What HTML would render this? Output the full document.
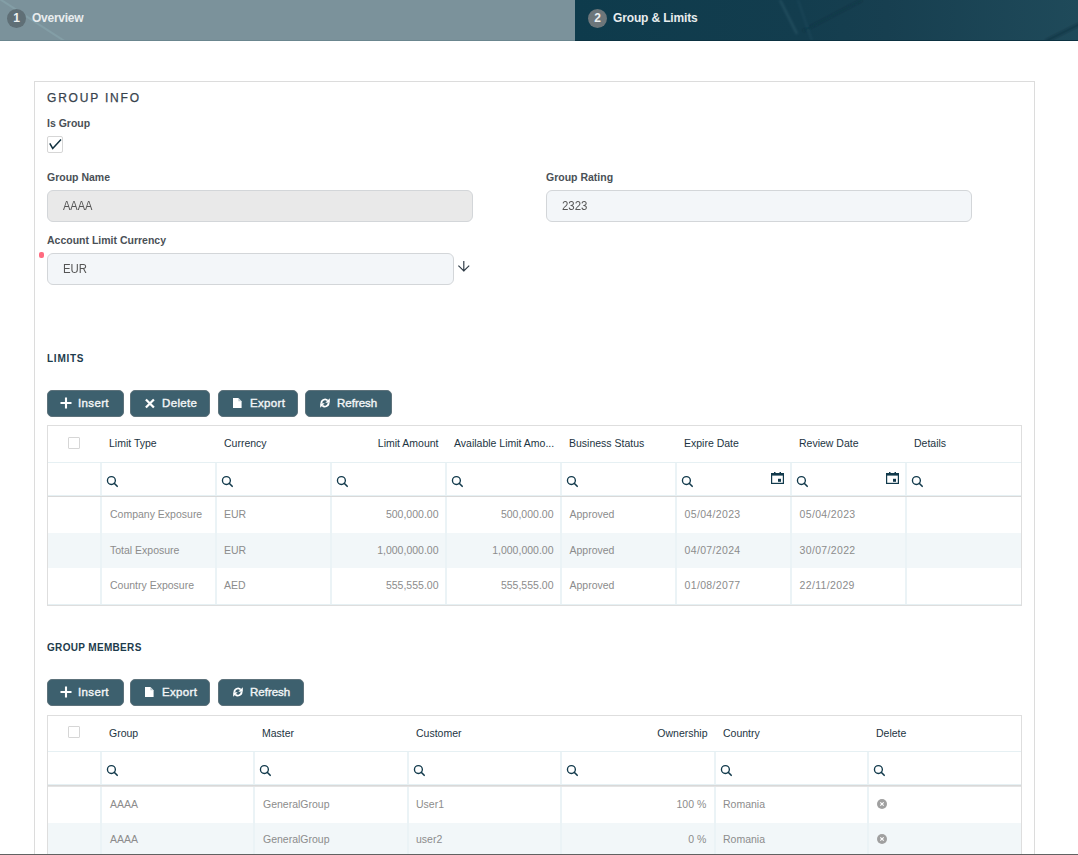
<!DOCTYPE html>
<html><head><meta charset="utf-8"><style>
*{box-sizing:border-box;margin:0;padding:0}
html,body{width:1078px;height:855px;overflow:hidden;background:#fff;font-family:"Liberation Sans",sans-serif}
body{position:relative}
.a{position:absolute;white-space:nowrap}
.circ{position:absolute;width:19px;height:19px;border-radius:50%;text-align:center;color:#eef1f2;font-size:12px;font-weight:bold;line-height:19px}
.ttl{font-weight:bold;font-size:12px;color:#e8ecee;line-height:14px}
.lbl{font-weight:bold;font-size:10.5px;color:#4a5056;line-height:12px}
.inp{position:absolute;height:32px;border:1px solid #d3d6d9;border-radius:6px;background:#f3f6f9;font-size:12px;color:#555;line-height:30px;padding-left:15px}
.sec{font-weight:bold;font-size:10px;color:#1d3b4c;line-height:11px}
.btn{position:absolute;height:27px;background:#3d606e;border:1px solid #5d727b;border-radius:5px}
.bt{position:absolute;color:#f2f5f6;font-size:11.5px;letter-spacing:0.35px;-webkit-text-stroke:0.4px #f2f5f6;line-height:13px;white-space:nowrap}
.tbl{position:absolute;left:47px;width:975px;border:1px solid #dedede;overflow:hidden}
.th{position:absolute;font-size:10.5px;color:#1c3442;line-height:12px;white-space:nowrap}
.td{position:absolute;font-size:10.5px;color:#8c8c8c;line-height:12px;white-space:nowrap}
.vd{position:absolute;width:2px;background:#ebf3f6}
.hl{position:absolute;left:0;width:973px;height:1px;background:#e6f0f3}
.gl{position:absolute;left:0;width:973px;height:1px;background:#d9d9d9}
.stripe{position:absolute;left:0;width:973px;background:#f2f7f9}
.cb{position:absolute;width:12px;height:12px;border:1px solid #d6d6d6;border-radius:1px;background:#fff}
svg{position:absolute;overflow:visible}
</style></head><body>
<div class="a" style="left:0;top:0;width:575px;height:41px;background:#7b929b;border-bottom:1px solid #6b868f;overflow:hidden"><div class="a" style="left:0px;top:-2px;width:90px;height:1.5px;background:rgba(160,200,205,0.22);filter:blur(0.4px);transform:rotate(33deg);transform-origin:0 0"></div></div>
<div class="a" style="left:575px;top:0;width:503px;height:41px;background:linear-gradient(90deg,#0e3b4c 0%,#133d4e 45%,#173f50 62%,#1f4a5a 100%);border-bottom:1px solid #0b3141"></div>
<svg style="left:575px;top:0;overflow:hidden" width="503" height="40" viewBox="575 0 503 40"><defs><filter id="bl"><feGaussianBlur stdDeviation="0.9"/></filter></defs><g filter="url(#bl)"><line x1="780" y1="0" x2="797" y2="34" stroke="rgba(120,170,185,0.14)" stroke-width="2.5"/><line x1="798" y1="0" x2="812" y2="41" stroke="rgba(120,170,185,0.08)" stroke-width="2"/><line x1="803" y1="31" x2="862" y2="0" stroke="rgba(5,35,50,0.22)" stroke-width="3"/><line x1="1046" y1="41" x2="1080" y2="24" stroke="rgba(5,35,50,0.4)" stroke-width="3"/></g></svg>
<div class="circ a" style="left:7px;top:9px;background:#5f6f76">1</div>
<div class="a ttl" style="left:32px;top:11px;letter-spacing:-0.25px">Overview</div>
<div class="circ a" style="left:588px;top:9px;background:#6d767a">2</div>
<div class="a ttl" style="left:613px;top:11px;letter-spacing:-0.15px">Group &amp; Limits</div>
<div class="a" style="left:34px;top:81px;width:1001px;height:800px;border:1px solid #dcdcdc"></div>
<div class="a" style="left:47px;top:91px;font-size:12px;letter-spacing:1.8px;color:#38434d;line-height:14px;-webkit-text-stroke:0.25px #38434d">GROUP INFO</div>
<div class="a lbl" style="left:47px;top:117px">Is Group</div>
<div class="a" style="left:47px;top:136px;width:16px;height:17px;border:1px solid #d6d6d6;border-radius:2px"></div>
<svg style="left:48px;top:138px" width="14" height="12" viewBox="0 0 14 12"><path d="M1.8 5.4L4.7 10.4L13 1.6" fill="none" stroke="#10303f" stroke-width="1.5"/></svg>
<div class="a lbl" style="left:47px;top:171px">Group Name</div>
<div class="inp" style="left:47px;top:190px;width:426px;background:#e9e9e9"><span style="display:inline-block;transform:scaleX(0.92);transform-origin:0 50%">AAAA</span></div>
<div class="a lbl" style="left:546px;top:171px">Group Rating</div>
<div class="inp" style="left:546px;top:190px;width:426px"><span style="display:inline-block;transform:scaleX(0.955);transform-origin:0 50%">2323</span></div>
<div class="a lbl" style="left:47px;top:234px">Account Limit Currency</div>
<div class="a" style="left:39px;top:252px;width:5px;height:6px;border-radius:2px;background:#ff6b80"></div>
<div class="inp" style="left:47px;top:253px;width:407px"><span style="display:inline-block;transform:scaleX(0.95);transform-origin:0 50%">EUR</span></div>
<svg style="left:457px;top:260px" width="13" height="12" viewBox="0 0 13 12"><path d="M6.8 1V11.4M1.4 5.6L6.8 11L12.2 5.6" fill="none" stroke="#2c3944" stroke-width="1.15"/></svg>
<div class="a sec" style="left:47px;top:352.5px;letter-spacing:0.75px">LIMITS</div>
<div class="btn" style="left:47px;top:390px;width:77px"></div>
<svg style="left:60px;top:397px" width="12" height="12" viewBox="0 0 12 12"><path d="M6 0.5V11.5M0.5 6H11.5" stroke="#fff" stroke-width="2.1"/></svg>
<div class="bt" style="left:78px;top:397px">Insert</div>
<div class="btn" style="left:130px;top:390px;width:80px"></div>
<svg style="left:144.6px;top:398.6px" width="10" height="9" viewBox="0 0 10 9"><path d="M0.9 0.5L8.9 8.5M8.9 0.5L0.9 8.5" stroke="#fff" stroke-width="2.3"/></svg>
<div class="bt" style="left:162px;top:397px">Delete</div>
<div class="btn" style="left:218px;top:390px;width:80px"></div>
<svg style="left:233px;top:398px" width="8.6" height="10" viewBox="0 0 8.6 10"><path d="M0 0H5.4L8.6 3.2V10H0Z" fill="#fff"/><path d="M5.4 0V3.2H8.6Z" fill="#b9c6cc" /></svg>
<div class="bt" style="left:250px;top:397px">Export</div>
<div class="btn" style="left:305px;top:390px;width:87px"></div>
<svg style="left:320px;top:398px" width="10" height="10" viewBox="0 0 10 10"><path d="M1.4 5.2A3.6 3.6 0 0 1 7.7 2.7" fill="none" stroke="#fff" stroke-width="1.8"/><path d="M9.8 0.2V4.7H5.3Z" fill="#fff"/><path d="M8.6 4.8A3.6 3.6 0 0 1 2.3 7.3" fill="none" stroke="#fff" stroke-width="1.8"/><path d="M0.2 9.8V5.3H4.7Z" fill="#fff"/></svg>
<div class="bt" style="left:337px;top:397px;letter-spacing:0">Refresh</div>
<div class="tbl" style="top:425px;height:181px"><div class="stripe" style="top:107px;height:35px"></div><div class="vd" style="left:52px;top:37px;height:181px"></div><div class="vd" style="left:167px;top:37px;height:181px"></div><div class="vd" style="left:282px;top:37px;height:181px"></div><div class="vd" style="left:397px;top:37px;height:181px"></div><div class="vd" style="left:512px;top:37px;height:181px"></div><div class="vd" style="left:627px;top:37px;height:181px"></div><div class="vd" style="left:742px;top:37px;height:181px"></div><div class="vd" style="left:857px;top:37px;height:181px"></div><div class="hl" style="top:36px"></div><div class="hl" style="top:69px"></div><div class="gl" style="top:70px"></div><div class="hl" style="top:178px"></div></div>
<div class="cb" style="left:68px;top:437px"></div>
<div class="th" style="left:109px;top:437px">Limit Type</div>
<div class="th" style="left:224px;top:437px">Currency</div>
<div class="th" style="right:639.5px;top:437px">Limit Amount</div>
<div class="th" style="left:454px;top:437px">Available Limit Amo...</div>
<div class="th" style="left:569px;top:437px">Business Status</div>
<div class="th" style="left:684px;top:437px">Expire Date</div>
<div class="th" style="left:799px;top:437px">Review Date</div>
<div class="th" style="left:914px;top:437px">Details</div>
<svg style="left:106px;top:475.5px" width="12" height="12" viewBox="0 0 12 12"><circle cx="5.4" cy="4.5" r="3.95" fill="none" stroke="#123a4c" stroke-width="1.35"/><line x1="8.2" y1="7.3" x2="11.2" y2="10.3" stroke="#123a4c" stroke-width="1.6" stroke-linecap="round"/></svg>
<svg style="left:221px;top:475.5px" width="12" height="12" viewBox="0 0 12 12"><circle cx="5.4" cy="4.5" r="3.95" fill="none" stroke="#123a4c" stroke-width="1.35"/><line x1="8.2" y1="7.3" x2="11.2" y2="10.3" stroke="#123a4c" stroke-width="1.6" stroke-linecap="round"/></svg>
<svg style="left:336px;top:475.5px" width="12" height="12" viewBox="0 0 12 12"><circle cx="5.4" cy="4.5" r="3.95" fill="none" stroke="#123a4c" stroke-width="1.35"/><line x1="8.2" y1="7.3" x2="11.2" y2="10.3" stroke="#123a4c" stroke-width="1.6" stroke-linecap="round"/></svg>
<svg style="left:451px;top:475.5px" width="12" height="12" viewBox="0 0 12 12"><circle cx="5.4" cy="4.5" r="3.95" fill="none" stroke="#123a4c" stroke-width="1.35"/><line x1="8.2" y1="7.3" x2="11.2" y2="10.3" stroke="#123a4c" stroke-width="1.6" stroke-linecap="round"/></svg>
<svg style="left:566px;top:475.5px" width="12" height="12" viewBox="0 0 12 12"><circle cx="5.4" cy="4.5" r="3.95" fill="none" stroke="#123a4c" stroke-width="1.35"/><line x1="8.2" y1="7.3" x2="11.2" y2="10.3" stroke="#123a4c" stroke-width="1.6" stroke-linecap="round"/></svg>
<svg style="left:681px;top:475.5px" width="12" height="12" viewBox="0 0 12 12"><circle cx="5.4" cy="4.5" r="3.95" fill="none" stroke="#123a4c" stroke-width="1.35"/><line x1="8.2" y1="7.3" x2="11.2" y2="10.3" stroke="#123a4c" stroke-width="1.6" stroke-linecap="round"/></svg>
<svg style="left:796px;top:475.5px" width="12" height="12" viewBox="0 0 12 12"><circle cx="5.4" cy="4.5" r="3.95" fill="none" stroke="#123a4c" stroke-width="1.35"/><line x1="8.2" y1="7.3" x2="11.2" y2="10.3" stroke="#123a4c" stroke-width="1.6" stroke-linecap="round"/></svg>
<svg style="left:911px;top:475.5px" width="12" height="12" viewBox="0 0 12 12"><circle cx="5.4" cy="4.5" r="3.95" fill="none" stroke="#123a4c" stroke-width="1.35"/><line x1="8.2" y1="7.3" x2="11.2" y2="10.3" stroke="#123a4c" stroke-width="1.6" stroke-linecap="round"/></svg>
<svg style="left:886px;top:472px" width="13" height="12" viewBox="0 0 13 12"><rect x="0.6" y="1.6" width="11.8" height="9.8" fill="none" stroke="#123a4c" stroke-width="1.2"/><rect x="0" y="1" width="13" height="2.6" fill="#123a4c"/><rect x="3" y="0" width="1.5" height="1.5" fill="#123a4c"/><rect x="8.5" y="0" width="1.5" height="1.5" fill="#123a4c"/><rect x="7" y="6.8" width="3" height="3" fill="#123a4c"/></svg>
<div class="td" style="left:110px;top:508.0px">Company Exposure</div>
<div class="td" style="left:224px;top:508.0px">EUR</div>
<div class="td" style="right:639.5px;top:508.0px">500,000.00</div>
<div class="td" style="right:524.5px;top:508.0px">500,000.00</div>
<div class="td" style="left:569.5px;top:508.0px">Approved</div>
<div class="td" style="left:684.5px;top:508.0px;letter-spacing:0.35px">05/04/2023</div>
<div class="td" style="left:799.5px;top:508.0px;letter-spacing:0.35px">05/04/2023</div>
<div class="td" style="left:110px;top:543.5px">Total Exposure</div>
<div class="td" style="left:224px;top:543.5px">EUR</div>
<div class="td" style="right:639.5px;top:543.5px">1,000,000.00</div>
<div class="td" style="right:524.5px;top:543.5px">1,000,000.00</div>
<div class="td" style="left:569.5px;top:543.5px">Approved</div>
<div class="td" style="left:684.5px;top:543.5px;letter-spacing:0.35px">04/07/2024</div>
<div class="td" style="left:799.5px;top:543.5px;letter-spacing:0.35px">30/07/2022</div>
<div class="td" style="left:110px;top:579.0px">Country Exposure</div>
<div class="td" style="left:224px;top:579.0px">AED</div>
<div class="td" style="right:639.5px;top:579.0px">555,555.00</div>
<div class="td" style="right:524.5px;top:579.0px">555,555.00</div>
<div class="td" style="left:569.5px;top:579.0px">Approved</div>
<div class="td" style="left:684.5px;top:579.0px;letter-spacing:0.35px">01/08/2077</div>
<div class="td" style="left:799.5px;top:579.0px;letter-spacing:0.35px">22/11/2029</div>
<svg style="left:771px;top:472px" width="13" height="12" viewBox="0 0 13 12"><rect x="0.6" y="1.6" width="11.8" height="9.8" fill="none" stroke="#123a4c" stroke-width="1.2"/><rect x="0" y="1" width="13" height="2.6" fill="#123a4c"/><rect x="3" y="0" width="1.5" height="1.5" fill="#123a4c"/><rect x="8.5" y="0" width="1.5" height="1.5" fill="#123a4c"/><rect x="7" y="6.8" width="3" height="3" fill="#123a4c"/></svg>
<div class="a sec" style="left:47px;top:641.5px;letter-spacing:0.33px">GROUP MEMBERS</div>
<div class="btn" style="left:47px;top:679px;width:77px"></div>
<svg style="left:60px;top:686px" width="12" height="12" viewBox="0 0 12 12"><path d="M6 0.5V11.5M0.5 6H11.5" stroke="#fff" stroke-width="2.1"/></svg>
<div class="bt" style="left:78px;top:686px">Insert</div>
<div class="btn" style="left:130px;top:679px;width:80px"></div>
<svg style="left:145px;top:687px" width="8.6" height="10" viewBox="0 0 8.6 10"><path d="M0 0H5.4L8.6 3.2V10H0Z" fill="#fff"/><path d="M5.4 0V3.2H8.6Z" fill="#b9c6cc" /></svg>
<div class="bt" style="left:162px;top:686px">Export</div>
<div class="btn" style="left:218px;top:679px;width:86px"></div>
<svg style="left:233px;top:687px" width="10" height="10" viewBox="0 0 10 10"><path d="M1.4 5.2A3.6 3.6 0 0 1 7.7 2.7" fill="none" stroke="#fff" stroke-width="1.8"/><path d="M9.8 0.2V4.7H5.3Z" fill="#fff"/><path d="M8.6 4.8A3.6 3.6 0 0 1 2.3 7.3" fill="none" stroke="#fff" stroke-width="1.8"/><path d="M0.2 9.8V5.3H4.7Z" fill="#fff"/></svg>
<div class="bt" style="left:250px;top:686px;letter-spacing:0">Refresh</div>
<div class="tbl" style="top:715px;height:200px"><div class="stripe" style="top:107px;height:33px"></div><div class="vd" style="left:52px;top:36px;height:200px"></div><div class="vd" style="left:205px;top:36px;height:200px"></div><div class="vd" style="left:359px;top:36px;height:200px"></div><div class="vd" style="left:512px;top:36px;height:200px"></div><div class="vd" style="left:666px;top:36px;height:200px"></div><div class="vd" style="left:819px;top:36px;height:200px"></div><div class="hl" style="top:35px"></div><div class="hl" style="top:68px"></div><div class="gl" style="top:69px"></div><div class="gl" style="top:70px;background:#e4e4e4"></div></div>
<div class="cb" style="left:68px;top:726px"></div>
<div class="th" style="left:109px;top:727px">Group</div>
<div class="th" style="left:262px;top:727px">Master</div>
<div class="th" style="left:416px;top:727px">Customer</div>
<div class="th" style="right:370.5px;top:727px">Ownership</div>
<div class="th" style="left:723px;top:727px">Country</div>
<div class="th" style="left:876px;top:727px">Delete</div>
<svg style="left:106px;top:765px" width="12" height="12" viewBox="0 0 12 12"><circle cx="5.4" cy="4.5" r="3.95" fill="none" stroke="#123a4c" stroke-width="1.35"/><line x1="8.2" y1="7.3" x2="11.2" y2="10.3" stroke="#123a4c" stroke-width="1.6" stroke-linecap="round"/></svg>
<svg style="left:259px;top:765px" width="12" height="12" viewBox="0 0 12 12"><circle cx="5.4" cy="4.5" r="3.95" fill="none" stroke="#123a4c" stroke-width="1.35"/><line x1="8.2" y1="7.3" x2="11.2" y2="10.3" stroke="#123a4c" stroke-width="1.6" stroke-linecap="round"/></svg>
<svg style="left:413px;top:765px" width="12" height="12" viewBox="0 0 12 12"><circle cx="5.4" cy="4.5" r="3.95" fill="none" stroke="#123a4c" stroke-width="1.35"/><line x1="8.2" y1="7.3" x2="11.2" y2="10.3" stroke="#123a4c" stroke-width="1.6" stroke-linecap="round"/></svg>
<svg style="left:566px;top:765px" width="12" height="12" viewBox="0 0 12 12"><circle cx="5.4" cy="4.5" r="3.95" fill="none" stroke="#123a4c" stroke-width="1.35"/><line x1="8.2" y1="7.3" x2="11.2" y2="10.3" stroke="#123a4c" stroke-width="1.6" stroke-linecap="round"/></svg>
<svg style="left:720px;top:765px" width="12" height="12" viewBox="0 0 12 12"><circle cx="5.4" cy="4.5" r="3.95" fill="none" stroke="#123a4c" stroke-width="1.35"/><line x1="8.2" y1="7.3" x2="11.2" y2="10.3" stroke="#123a4c" stroke-width="1.6" stroke-linecap="round"/></svg>
<svg style="left:873px;top:765px" width="12" height="12" viewBox="0 0 12 12"><circle cx="5.4" cy="4.5" r="3.95" fill="none" stroke="#123a4c" stroke-width="1.35"/><line x1="8.2" y1="7.3" x2="11.2" y2="10.3" stroke="#123a4c" stroke-width="1.6" stroke-linecap="round"/></svg>
<div class="td" style="left:110px;top:797.5px">AAAA</div>
<div class="td" style="left:263px;top:797.5px">GeneralGroup</div>
<div class="td" style="left:416px;top:797.5px">User1</div>
<div class="td" style="right:371.70000000000005px;top:797.5px">100 %</div>
<div class="td" style="left:723px;top:797.5px">Romania</div>
<svg style="left:877px;top:798.5px" width="10" height="10" viewBox="0 0 10 10"><circle cx="5" cy="5" r="5" fill="#a0a0a0"/><path d="M3.3 3.3L6.7 6.7M6.7 3.3L3.3 6.7" stroke="#fff" stroke-width="1.1"/></svg>
<div class="td" style="left:110px;top:832.5px">AAAA</div>
<div class="td" style="left:263px;top:832.5px">GeneralGroup</div>
<div class="td" style="left:416px;top:832.5px">user2</div>
<div class="td" style="right:371.70000000000005px;top:832.5px">0 %</div>
<div class="td" style="left:723px;top:832.5px">Romania</div>
<svg style="left:877px;top:833.5px" width="10" height="10" viewBox="0 0 10 10"><circle cx="5" cy="5" r="5" fill="#a0a0a0"/><path d="M3.3 3.3L6.7 6.7M6.7 3.3L3.3 6.7" stroke="#fff" stroke-width="1.1"/></svg>
<div class="a" style="left:0;top:854px;width:1078px;height:1px;background:#626262"></div>
</body></html>
